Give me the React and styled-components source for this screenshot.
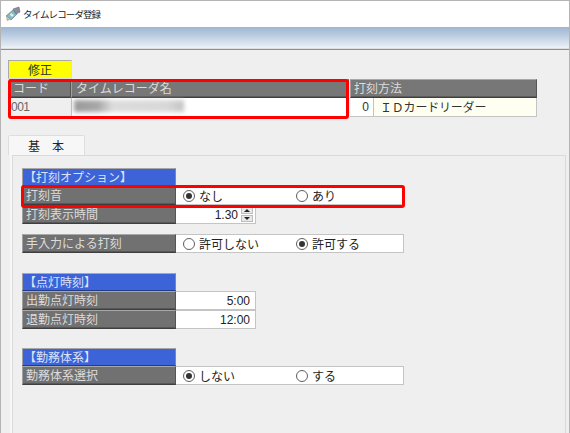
import React from "react";
import styled, { createGlobalStyle } from "styled-components";

const GlobalStyle = createGlobalStyle`
  html, body {
    margin: 0;
    padding: 0;
    background: #efefef;
  }
  * {
    box-sizing: border-box;
  }
`;

const Win = styled.div`
  width: 570px;
  height: 433px;
  overflow: hidden;
  display: flex;
  flex-direction: column;
  background: #efefef;
  border: 1px solid #b4b4b4;
  border-bottom: 0;
  font-family: "Noto Sans CJK JP", "Noto Sans", sans-serif;
  font-size: 12px;
  color: #333;
`;
const TitleBar = styled.div`
  height: 26px;
  flex: none;
  display: flex;
  align-items: center;
  gap: 2px;
  padding: 0 0 1px 4px;
  background: #fff;
  font-size: 9.5px;
  letter-spacing: -0.9px;
  color: #222;
`;
const Band = styled.div`
  height: 23px;
  flex: none;
  background: linear-gradient(#9db6d3 0%, #b9cbe0 35%, #e6edf4 85%, #f4f6f8 93%, #8f8f8f 95%);
`;
const Top = styled.div`
  padding: 10px 0 0 7px;
  display: flex;
  flex-direction: column;
  align-items: flex-start;
`;
const ModeTag = styled.div`
  width: 64px;
  height: 19px;
  background: #ffff00;
  border: 1px solid #aaa;
  border-bottom-color: #ddd;
  border-right-color: #ddd;
  text-align: center;
  line-height: 17px;
  color: #333;
`;
const TableRow = styled.div`
  display: flex;
  padding-left: 1px;
`;
const Column = styled.div`
  display: flex;
  flex-direction: column;
  width: ${(p) => p.$w}px;
  flex: none;
  margin-right: ${(p) => p.$gap || 0}px;
`;
const HeadCell = styled.div`
  height: 19px;
  padding-left: ${(p) => p.$pad || 3}px;
  line-height: 16px;
  color: #dcdcdc;
  background: #777;
  border: 1px solid;
  border-color: #a8a8a8 #555 #3e3e3e #a0a0a0;
  box-shadow: inset 0 -1px #5c5c5c;
  white-space: nowrap;
`;
const DataRow = styled.div`
  height: 19px;
  display: flex;
  border-bottom: 1px solid #c4c4c4;
`;
const CodeCell = styled.div`
  width: 100%;
  padding-left: 2px;
  line-height: 18px;
  font-family: "Liberation Sans", sans-serif;
  font-size: 12px;
  letter-spacing: -0.5px;
  color: #666;
  background: #efefef;
`;
const NameCell = styled.div`
  width: 100%;
  height: 18px;
  padding: 2px 0 0 2px;
  background: #fff;
  border-left: 1px solid #c4c4c4;
`;
const Redacted = styled.div`
  width: 110px;
  height: 12px;
  background: linear-gradient(90deg, #9a9a9a 0%, #a8a8a8 22%, #dcdcdc 35%, #d8d8d8 85%, #c4c4c4 100%);
  filter: blur(2px);
`;
const NumCell = styled.div`
  width: 24px;
  flex: none;
  padding-right: 4px;
  text-align: right;
  line-height: 18px;
  font-family: "Liberation Sans", sans-serif;
  font-size: 12px;
  background: #fff;
  border-right: 1px solid #c4c4c4;
`;
const MethodCell = styled.div`
  flex: 1;
  padding-left: 6px;
  line-height: 18px;
  letter-spacing: -0.2px;
  background: #fefff0;
  border-right: 1px solid #c4c4c4;
`;
const Highlight = styled.div`
  position: relative;
`;
const RedFrame = styled.div`
  position: absolute;
  left: ${(p) => p.$l}px;
  top: ${(p) => p.$t}px;
  width: ${(p) => p.$w}px;
  height: ${(p) => p.$h}px;
  border: 3px solid #f00;
  border-radius: 3px;
  pointer-events: none;
`;
const Tabs = styled.div`
  flex: 1;
  margin: 18px 3px 0 7px;
  display: flex;
  flex-direction: column;
  min-height: 0;
`;
const Tab = styled.div`
  width: 77px;
  height: 20px;
  flex: none;
  padding-left: 19px;
  line-height: 19px;
  color: #222;
  background: #f7f7f7;
  border: 1px solid #dedede;
  border-bottom: 0;
  border-radius: 2px 2px 0 0;
`;
const Panel = styled.div`
  flex: 1;
  margin-left: 4px;
  padding: 12px 0 0 9px;
  border: 1px solid #dadada;
  border-bottom: 0;
  box-shadow: -2px 0 0 #f7f7f7;
`;
const Group = styled.div`
  display: flex;
  flex-direction: column;
  align-items: flex-start;
  margin-bottom: ${(p) => p.$after}px;
`;
const SectionHead = styled.div`
  width: 154px;
  height: 18px;
  padding-left: 1px;
  line-height: 15px;
  color: #dbe3fa;
  background: #3d63d8;
  border: 1px solid;
  border-color: #a7a7a7 #6c86d8 #223c88 #a0a0a0;
`;
const Row = styled.div`
  display: flex;
  height: 19px;
`;
const Label = styled.div`
  width: 154px;
  flex: none;
  padding-left: 3px;
  line-height: 16px;
  white-space: nowrap;
  color: #dcdcdc;
  background: #717171;
  border: 1px solid;
  border-color: #a8a8a8 #555 #3e3e3e #a0a0a0;
  box-shadow: inset 0 -1px #585858;
`;
const Field = styled.div`
  width: ${(p) => p.$w}px;
  flex: none;
  display: flex;
  align-items: center;
  background: #fff;
  border: 1px solid #c4c4c4;
  border-left: 0;
`;
const NumberValue = styled.div`
  flex: 1;
  padding-right: ${(p) => p.$pad}px;
  text-align: right;
  font-family: "Liberation Sans", sans-serif;
  font-size: 12px;
  color: #222;
`;
const Spinner = styled.div`
  width: 12px;
  height: 15px;
  margin-right: 2px;
  display: flex;
  flex-direction: column;
  gap: 1px;
`;
const SpinButton = styled.div`
  flex: 1;
  display: flex;
  align-items: center;
  justify-content: center;
  background: #e8e8e8;
  border: 1px solid #bdbdbd;
  &::after {
    content: "";
    border-left: 3px solid transparent;
    border-right: 3px solid transparent;
    ${(p) => (p.$down ? "border-top: 3px solid #222;" : "border-bottom: 3px solid #222;")}
  }
`;
const RadioOption = styled.div`
  width: ${(p) => p.$w}px;
  flex: none;
  display: flex;
  align-items: center;
  gap: 4px;
  color: #222;
  white-space: nowrap;
`;
const RadioGroup = styled.div`
  display: flex;
  padding-left: 7px;
`;
const Circle = styled.span`
  width: 12px;
  height: 12px;
  flex: none;
  display: flex;
  align-items: center;
  justify-content: center;
  background: #fff;
  border: 1px solid #5e5e5e;
  border-radius: 50%;
  &::after {
    content: "";
    width: 6px;
    height: 6px;
    border-radius: 50%;
    background: ${(p) => (p.$on ? "#333" : "transparent")};
  }
`;

const AppIcon = () => (
  <svg width="16" height="16" viewBox="0 0 16 16">
    <path d="M1 10 L8 4 L12 8 L6 14 Z" fill="#7fb8c8" stroke="#66808c" strokeWidth="0.7" />
    <path d="M8 3 L14 1 L15 6 L11 8 Z" fill="#8c8c9c" stroke="#66667a" strokeWidth="0.6" />
    <path d="M1 11 L5 14 L2 15 Z" fill="#e0a860" />
    <path d="M6 7 L9 9 L7 11 L5 9 Z" fill="#eeeed0" />
  </svg>
);

const Radio = ({ on, w, children }) => (
  <RadioOption $w={w}>
    <Circle $on={on} />
    {children}
  </RadioOption>
);

export default function App() {
  return (
    <>
      <GlobalStyle />
      <Win>
        <TitleBar>
          <AppIcon />
          タイムレコーダ登録
        </TitleBar>
        <Band />
        <Top>
          <ModeTag>修正</ModeTag>
          <Highlight>
            <TableRow>
              <Column $w={62}>
                <HeadCell>コード</HeadCell>
                <DataRow>
                  <CodeCell>001</CodeCell>
                </DataRow>
              </Column>
              <Column $w={278} $gap={1}>
                <HeadCell $pad={4}>タイムレコーダ名</HeadCell>
                <DataRow>
                  <NameCell>
                    <Redacted />
                  </NameCell>
                </DataRow>
              </Column>
              <Column $w={187}>
                <HeadCell>打刻方法</HeadCell>
                <DataRow>
                  <NumCell>0</NumCell>
                  <MethodCell>ＩＤカードリーダー</MethodCell>
                </DataRow>
              </Column>
            </TableRow>
            <RedFrame $l={0} $t={0} $w={341} $h={40} />
          </Highlight>
        </Top>
        <Tabs>
          <Tab>基　本</Tab>
          <Panel>
            <Group $after={10}>
              <SectionHead>【打刻オプション】</SectionHead>
              <Highlight>
                <Row>
                  <Label>打刻音</Label>
                  <Field $w={228}>
                    <RadioGroup>
                      <Radio on w={113}>なし</Radio>
                      <Radio w={100}>あり</Radio>
                    </RadioGroup>
                  </Field>
                </Row>
                <RedFrame $l={-1} $t={-1} $w={384} $h={23} />
              </Highlight>
              <Row>
                <Label>打刻表示時間</Label>
                <Field $w={80}>
                  <NumberValue $pad={3}>1.30</NumberValue>
                  <Spinner>
                    <SpinButton />
                    <SpinButton $down />
                  </Spinner>
                </Field>
              </Row>
            </Group>
            <Group $after={20}>
              <Row>
                <Label>手入力による打刻</Label>
                <Field $w={228}>
                  <RadioGroup>
                    <Radio w={113}>許可しない</Radio>
                    <Radio on w={100}>許可する</Radio>
                  </RadioGroup>
                </Field>
              </Row>
            </Group>
            <Group $after={19}>
              <SectionHead>【点灯時刻】</SectionHead>
              <Row>
                <Label>出勤点灯時刻</Label>
                <Field $w={80}>
                  <NumberValue $pad={5}>5:00</NumberValue>
                </Field>
              </Row>
              <Row>
                <Label>退勤点灯時刻</Label>
                <Field $w={80}>
                  <NumberValue $pad={5}>12:00</NumberValue>
                </Field>
              </Row>
            </Group>
            <Group $after={0}>
              <SectionHead>【勤務体系】</SectionHead>
              <Row>
                <Label>勤務体系選択</Label>
                <Field $w={228}>
                  <RadioGroup>
                    <Radio on w={113}>しない</Radio>
                    <Radio w={100}>する</Radio>
                  </RadioGroup>
                </Field>
              </Row>
            </Group>
          </Panel>
        </Tabs>
      </Win>
    </>
  );
}
